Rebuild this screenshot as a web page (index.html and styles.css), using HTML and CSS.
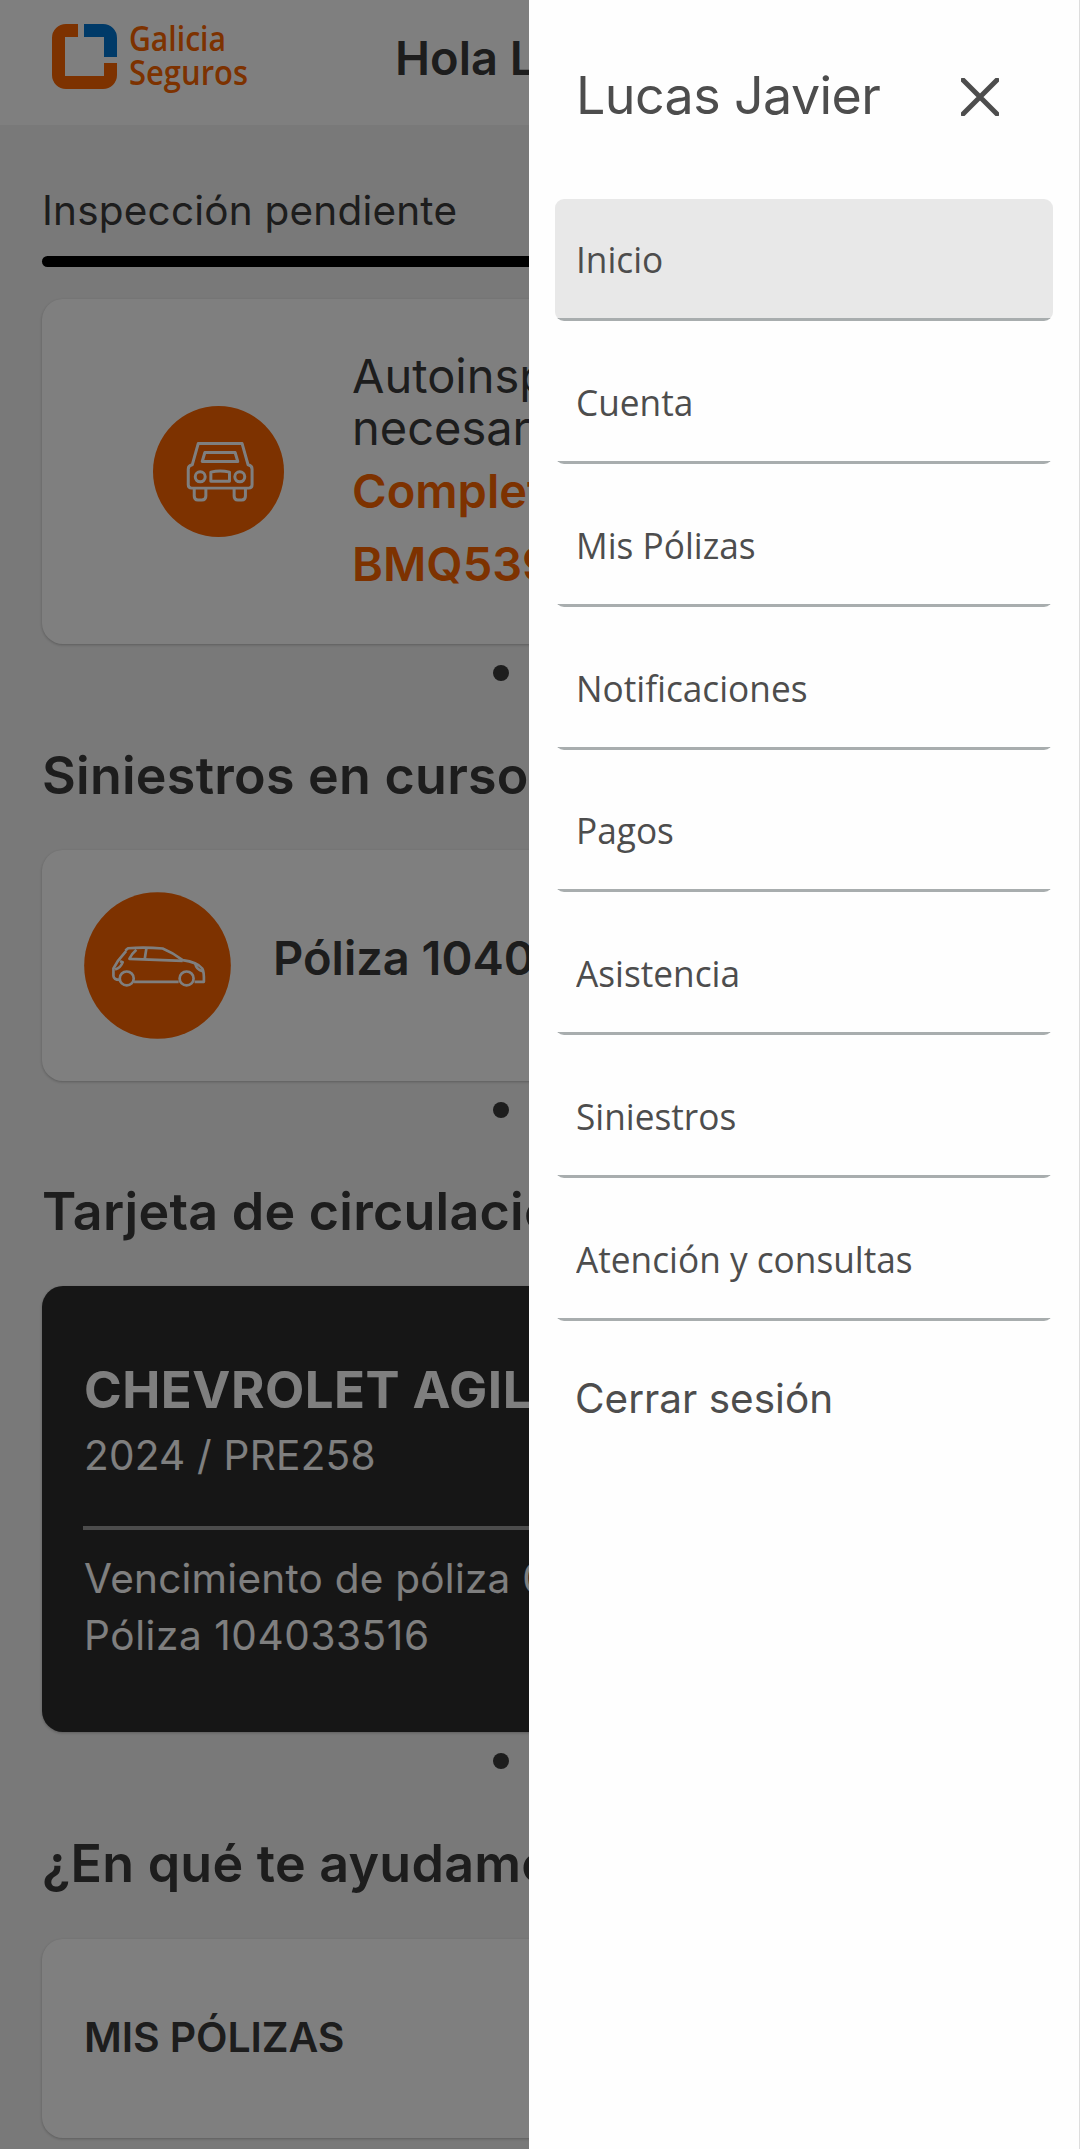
FILE: index.html
```html
<!DOCTYPE html>
<html lang="es">
<head>
  <meta charset="UTF-8" />
  <meta name="viewport" content="width=device-width, initial-scale=1.0" />
  <title>Galicia Seguros</title>
  <link rel="stylesheet" href="styles.css">
</head>
<body>
  <div class="app">
    <header class="header">
      <svg class="logo" viewBox="0 0 200 80" role="img" aria-label="Galicia Seguros">
        <path d="M26 0H14A14 14 0 0 0 0 14V51A14 14 0 0 0 14 65H51A14 14 0 0 0 65 51V39H52V52H13V13H26Z" fill="#fa6400" />
        <path d="M32 0H51A14 14 0 0 1 65 14V33H52V13H32Z" fill="#0074d0" />
        <text x="77" y="27" textLength="97" lengthAdjust="spacingAndGlyphs">Galicia</text>
        <text x="77" y="61" textLength="119" lengthAdjust="spacingAndGlyphs">Seguros</text>
      </svg>
      <h1 class="greeting">Hola Lucas</h1>
    </header>

    <main class="content">
      <div class="tab">Inspección pendiente</div>
      <div class="tab-bar"></div>

      <div class="card card-inspection">
        <svg class="icon-front" viewBox="68 47 394 394">
          <circle cx="265" cy="244" r="197" fill="#fa6400" />
          <g fill="none" stroke="#fff" stroke-width="9" stroke-linejoin="round">
            <path d="M204 160H336L354 224Q366 226 366 237V284Q366 294 356 294H184Q174 294 174 284V237Q174 226 186 224Z" />
            <path d="M224 187H315L323 214H216Z" />
            <circle cx="210" cy="260" r="15" />
            <circle cx="329" cy="260" r="15" />
            <path d="M242 246Q270 239 298 246V273H242Z" />
            <path d="M192 296V318Q192 330 203 330H215Q227 330 227 318V296M312 296V318Q312 330 323 330H335Q346 330 346 318V296" />
          </g>
        </svg>
        <div class="inspection-text">
          <p>Autoinspección</p>
          <p>necesaria</p>
          <a href="#">Completar</a>
          <a href="#">BMQ539</a>
        </div>
      </div>
      <div class="dots"><span></span></div>

      <h2>Siniestros en curso</h2>
      <div class="card card-claim">
        <svg class="icon-side" viewBox="42 32 441 442">
          <circle cx="262.500" cy="253" r="220.500" fill="#fa6400" />
          <g fill="none" stroke="#fff" stroke-width="8" stroke-linejoin="round">
            <path d="M166 208L174 201Q225 197 278 202Q308 214 338 237Q382 243 397 262Q403 272 402 302H374M326 302H192M149 296Q131 296 130 284V262L143 240L168 210" />
            <path d="M199 206Q184 219 178 233L338 239M229 202L224 234" />
            <path d="M150 240L158 243Q152 260 135 265M376 247Q379 265 398 270" />
            <circle cx="170" cy="292" r="21" />
            <circle cx="350" cy="292" r="21" />
          </g>
        </svg>
        <span>Póliza 104033516</span>
      </div>
      <div class="dots"><span></span></div>

      <h2>Tarjeta de circulación</h2>
      <div class="card card-vehicle">
        <h3>CHEVROLET AGILE</h3>
        <p class="plate">2024 / PRE258</p>
        <hr>
        <p>Vencimiento de póliza 01/2025</p>
        <p class="policy">Póliza 104033516</p>
      </div>
      <div class="dots"><span></span></div>

      <h2>¿En qué te ayudamos?</h2>
      <div class="card card-help">MIS PÓLIZAS</div>
    </main>
  </div>

  <div class="overlay"></div>

  <aside class="drawer">
    <div class="drawer-header">
      <span>Lucas Javier</span>
      <svg class="close" viewBox="0 0 38 38">
        <path d="M2 2L36 36M36 2L2 36" />
      </svg>
    </div>
    <nav class="menu">
      <a href="#" class="active"><span>Inicio</span></a>
      <a href="#"><span>Cuenta</span></a>
      <a href="#"><span>Mis Pólizas</span></a>
      <a href="#"><span>Notificaciones</span></a>
      <a href="#"><span>Pagos</span></a>
      <a href="#"><span>Asistencia</span></a>
      <a href="#"><span>Siniestros</span></a>
      <a href="#"><span>Atención y consultas</span></a>
    </nav>
    <a href="#" class="logout">Cerrar sesión</a>
  </aside>
</body>
</html>
```
FILE: styles.css
```css
* {
  margin: 0;
  padding: 0;
  box-sizing: border-box;
}
body {
  font-family: Inter, sans-serif;
  background: #f3f3f3;
  color: #3a3a3a;
  overflow: hidden;
}
a {
  text-decoration: none;
  color: inherit;
}
.app {
  height: 2149px;
  overflow: hidden;
  white-space: nowrap;
}
.header {
  display: flex;
  align-items: flex-start;
  height: 125px;
  padding: 24px 0 0 52px;
  background: #fff;
}
.logo {
  width: 200px;
  height: 80px;
  overflow: visible;
  font-family: "Open Sans", sans-serif;
  font-size: 35px;
  font-weight: 600;
  fill: #fa6400;
}
.greeting {
  margin-left: 143px;
  font-size: 47px;
  font-weight: 600;
  line-height: 68px;
}
.content {
  padding: 60px 42px 0;
}
.tab {
  font-size: 40.5px;
  line-height: 52px;
  letter-spacing: 0.2px;
}
.tab-bar {
  height: 11px;
  margin: 19px 0 32px;
  border-radius: 6px;
  background: #000;
}
.card {
  border-radius: 21px;
  background: #fff;
  box-shadow: 0 1px 3px rgba(0, 0, 0, 0.25);
}
.card-inspection {
  display: flex;
  align-items: flex-start;
  height: 345px;
  padding: 51px 0 0 111px;
  font-size: 47px;
  overflow: hidden;
}
.icon-front {
  flex: none;
  width: 131px;
  height: 131px;
  margin: 56px 68px 0 0;
}
.inspection-text p {
  line-height: 52px;
}
.inspection-text a {
  display: block;
  font-weight: 600;
  line-height: 73px;
  color: #fa6400;
}
.dots {
  display: flex;
  height: 16px;
  margin-top: 21px;
  padding-left: 451px;
}
.dots span {
  width: 16px;
  border-radius: 50%;
  background: #3a3a3a;
}
h2 {
  margin: 63.5px 0 43px;
  font-size: 52px;
  font-weight: 600;
  line-height: 62px;
  letter-spacing: 0.25px;
}
.card-claim {
  display: flex;
  align-items: center;
  height: 231px;
  padding-left: 42px;
  font-size: 47px;
  font-weight: 600;
}
.card-claim span {
  margin: 0 0 16px 42px;
}
.icon-side {
  flex: none;
  width: 147px;
  height: 147px;
}
.card-vehicle {
  height: 446px;
  padding: 73px 0 0 42px;
  background: #2c2c2c;
  color: #fff;
  font-size: 40.5px;
  line-height: 57px;
  letter-spacing: 0.25px;
  overflow: hidden;
}
.card-vehicle h3 {
  font-size: 51px;
  font-weight: 700;
  line-height: 62px;
  letter-spacing: 0.5px;
}
.card-vehicle .plate {
  margin-top: 10px;
  line-height: 50px;
}
.card-vehicle .policy {
  letter-spacing: 0.6px;
}
.card-vehicle hr {
  height: 4px;
  margin: 45px 41px 20px -1px;
  border: none;
  background: #999;
}
.card-help {
  height: 199px;
  margin-top: 44px;
  padding-left: 42px;
  font-size: 41px;
  font-weight: 600;
  line-height: 197px;
  letter-spacing: -0.1px;
}
.overlay {
  position: fixed;
  inset: 0;
  background: rgba(0, 0, 0, 0.5);
}
.drawer {
  position: fixed;
  top: 0;
  right: 0;
  width: 551px;
  height: 2149px;
  border-right: 1px solid #ddd;
  background: #fefefe;
  color: #4d4d4d;
}
.drawer-header {
  display: flex;
  justify-content: space-between;
  align-items: center;
  height: 199px;
  padding: 0 80px 7px 47px;
  font-size: 52px;
  letter-spacing: -0.6px;
}
.drawer-header span {
  margin-bottom: 2px;
}
.close {
  width: 38px;
  height: 38px;
  margin-top: 2px;
  fill: none;
  stroke: #4d4d4d;
  stroke-width: 5;
  stroke-linecap: round;
}
.menu {
  display: flex;
  flex-direction: column;
  gap: 20.86px;
  padding: 0 26px;
  font-family: "Open Sans", sans-serif;
  font-size: 37px;
}
.menu a {
  height: 122px;
  padding-left: 21px;
  border-radius: 9px;
  background: linear-gradient(to top, #a8adae 3px, transparent 3px);
  line-height: 120px;
}
.menu a.active {
  background: linear-gradient(to top, #a8adae 3px, #e8e8e8 3px);
}
.menu span {
  display: inline-block;
  transform: scaleX(0.952);
  transform-origin: left;
}
.logout {
  display: block;
  margin-top: 53px;
  padding-left: 46px;
  font-size: 40.5px;
  line-height: 50px;
}
```
